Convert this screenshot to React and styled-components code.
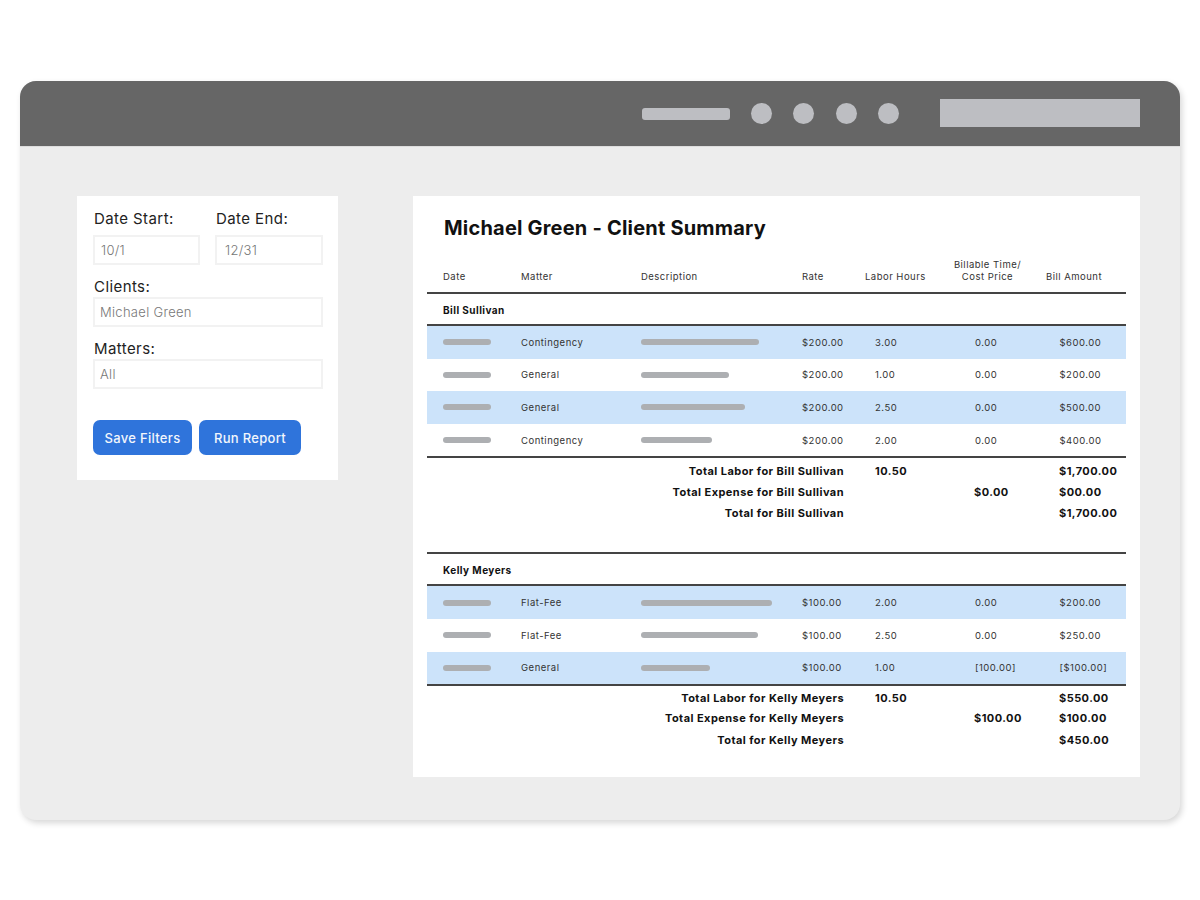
import React from "react";
import styled, { createGlobalStyle } from "styled-components";

const Global = createGlobalStyle`
  html, body { margin: 0; padding: 0; background: #fff; }
  body { font-family: Inter, "Liberation Sans", sans-serif; color: #111; }
`;
const Page = styled.div`
  width: 1200px; height: 900px; box-sizing: border-box; padding: 81px 20px 0; overflow: hidden;
`;
const Win = styled.div`
  height: 739px; border-radius: 16px; background: #ededed; overflow: hidden;
  box-shadow: 2px 3px 6px rgba(0,0,0,.16);
`;
const TopBar = styled.header`
  height: 65px; background: #666; display: flex; align-items: center; justify-content: flex-end;
  padding-right: 40px; border-bottom: 1px solid #ddd;
`;
const Pill = styled.div`width: 88px; height: 12px; border-radius: 3px; background: #bdbec2; margin-right: 21px;`;
const Dot = styled.div`width: 21px; height: 21px; border-radius: 50%; background: #bdbec2; margin-right: 21.5px;`;
const Search = styled.div`width: 200px; height: 28px; background: #bdbec2; margin-left: 19.5px; margin-bottom: 2px;`;
const Body = styled.div`display: flex; align-items: flex-start; padding: 49px 40px 0 57px; gap: 75px;`;
const Filters = styled.aside`
  width: 261px; height: 284px; box-sizing: border-box; background: #fff; padding: 13px 15px 0 16px;
  flex: none;
`;
const Pair = styled.div`
  display: grid; grid-template-columns: 107px 108px; column-gap: 15px; margin-bottom: 12px;
`;
const Label = styled.div`
  font-size: 15px; line-height: 20px; color: #222; letter-spacing: .42px; margin-left: 1px;
  height: ${p => p.$h}px;
`;
const Field = styled.div`
  height: 30px; box-sizing: border-box; border: 2px solid #f2f2f2; color: #777; font-size: 13px;
  font-weight: 300; line-height: 26px; padding-left: ${p => p.$pad || 5}px; letter-spacing: .3px;
  margin-bottom: ${p => p.$bottom || 0}px;
`;
const Buttons = styled.div`display: flex; gap: 7px; margin-top: 31px;`;
const Button = styled.button`
  height: 35px; width: ${p => p.$w}px; border: 0; border-radius: 7px; background: #2f74db; color: #f2f6fc;
  font: 500 13px Inter, sans-serif; letter-spacing: .3px; padding: 0;
`;
const Report = styled.main`
  flex: 1; height: 581px; box-sizing: border-box; background: #fff; padding: 0 14px;
`;
const Title = styled.h1`
  margin: 0; padding: 19px 0 0 17px; height: 57px; box-sizing: border-box;
  font-size: 20px; line-height: 27px; font-weight: 700; color: #111; letter-spacing: .2px;
`;
const cols = "94px 120px 161px 63px 80px 85px 96px";
const HeadRow = styled.div`
  display: grid; grid-template-columns: ${cols}; height: 41px; align-items: end; padding-bottom: 10px;
  box-sizing: border-box; border-bottom: 2px solid #444; font-size: 9.5px; line-height: 11.5px;
  color: #333; letter-spacing: .48px;
`;
const HeadCell = styled.div`
  padding-left: ${p => p.$pad || 0}px; text-align: ${p => p.$center ? "center" : "left"};
`;
const Group = styled.div`
  height: ${p => p.$h}px; padding: 1px 0 0 16px; display: flex; align-items: center; box-sizing: border-box;
  border-bottom: 2px solid #444; font-size: 10px; font-weight: 700; color: #111; letter-spacing: .45px;
  ${p => p.$top ? "border-top: 2px solid #444;" : ""}
`;
const Row = styled.div`
  display: grid; grid-template-columns: ${cols}; align-items: center; height: 32.6px;
  background: ${p => p.$blue ? "#cce3fa" : "#fff"}; font-size: 9.5px; color: #333; letter-spacing: .5px;
`;
const Cell = styled.div`padding-left: ${p => p.$pad || 0}px;`;
const Bar = styled.div`
  height: 6px; border-radius: 3px; background: #adafb2; width: ${p => p.$w}px; margin-left: ${p => p.$pad || 0}px;
`;
const Totals = styled.div`
  border-top: 2px solid #444; padding-top: ${p => p.$top}px; height: ${p => p.$h}px; box-sizing: border-box;
`;
const TotalRow = styled.div`
  display: grid; grid-template-columns: ${cols}; align-items: center; height: ${p => p.$h}px;
  font-size: 11px; font-weight: 700; color: #111; letter-spacing: .45px;
`;
const TotalLabel = styled.div`grid-column: 1 / span 4; text-align: right; padding-right: 21px;`;

function Section({ name, top, rows, totals, heights, h, groupH, pad }) {
  return (
    <>
      <Group $top={top} $h={groupH}>{name}</Group>
      {rows.map((r, i) => (
        <Row key={i} $blue={i % 2 === 0}>
          <Bar $w={48} $pad={16} />
          <Cell>{r[0]}</Cell>
          <Bar $w={r[1]} />
          <Cell>{r[2]}</Cell>
          <Cell $pad={10}>{r[3]}</Cell>
          <Cell $pad={30}>{r[4]}</Cell>
          <Cell $pad={29.5}>{r[5]}</Cell>
        </Row>
      ))}
      <Totals $top={pad} $h={h}>
        {totals.map((t, i) => (
          <TotalRow key={i} $h={heights[i]}>
            <TotalLabel>{t[0]}</TotalLabel>
            <Cell $pad={10}>{t[1]}</Cell>
            <Cell $pad={29}>{t[2]}</Cell>
            <Cell $pad={29}>{t[3]}</Cell>
          </TotalRow>
        ))}
      </Totals>
    </>
  );
}

export default function App() {
  return (
    <Page>
      <Global />
      <Win>
        <TopBar>
          <Pill /><Dot /><Dot /><Dot /><Dot /><Search />
        </TopBar>
        <Body>
          <Filters>
            <Pair>
              <div><Label $h={26}>Date Start:</Label><Field $pad={6}>10/1</Field></div>
              <div><Label $h={26}>Date End:</Label><Field $pad={8}>12/31</Field></div>
            </Pair>
            <Label $h={20}>Clients:</Label>
            <Field $bottom={12}>Michael Green</Field>
            <Label $h={20}>Matters:</Label>
            <Field>All</Field>
            <Buttons>
              <Button $w={99}>Save Filters</Button>
              <Button $w={102}>Run Report</Button>
            </Buttons>
          </Filters>
          <Report>
            <Title>Michael Green - Client Summary</Title>
            <HeadRow>
              <HeadCell $pad={16}>Date</HeadCell>
              <HeadCell>Matter</HeadCell>
              <HeadCell>Description</HeadCell>
              <HeadCell>Rate</HeadCell>
              <HeadCell>Labor Hours</HeadCell>
              <HeadCell $center>Billable Time/<br />Cost Price</HeadCell>
              <HeadCell $pad={16}>Bill Amount</HeadCell>
            </HeadRow>
            <Section
              name="Bill Sullivan"
              groupH={32}
              h={96}
              pad={3}
              rows={[
                ["Contingency", 118, "$200.00", "3.00", "0.00", "$600.00"],
                ["General", 88, "$200.00", "1.00", "0.00", "$200.00"],
                ["General", 104, "$200.00", "2.50", "0.00", "$500.00"],
                ["Contingency", 71, "$200.00", "2.00", "0.00", "$400.00"],
              ]}
              heights={[20, 22, 20]}
              totals={[
                ["Total Labor for Bill Sullivan", "10.50", "", "$1,700.00"],
                ["Total Expense for Bill Sullivan", "", "$0.00", "$00.00"],
                ["Total for Bill Sullivan", "", "", "$1,700.00"],
              ]}
            />
            <Section
              name="Kelly Meyers"
              top
              groupH={34}
              h={80}
              pad={2}
              rows={[
                ["Flat-Fee", 131, "$100.00", "2.00", "0.00", "$200.00"],
                ["Flat-Fee", 117, "$100.00", "2.50", "0.00", "$250.00"],
                ["General", 69, "$100.00", "1.00", "[100.00]", "[$100.00]"],
              ]}
              heights={[20, 20, 24]}
              totals={[
                ["Total Labor for Kelly Meyers", "10.50", "", "$550.00"],
                ["Total Expense for Kelly Meyers", "", "$100.00", "$100.00"],
                ["Total for Kelly Meyers", "", "", "$450.00"],
              ]}
            />
          </Report>
        </Body>
      </Win>
    </Page>
  );
}
